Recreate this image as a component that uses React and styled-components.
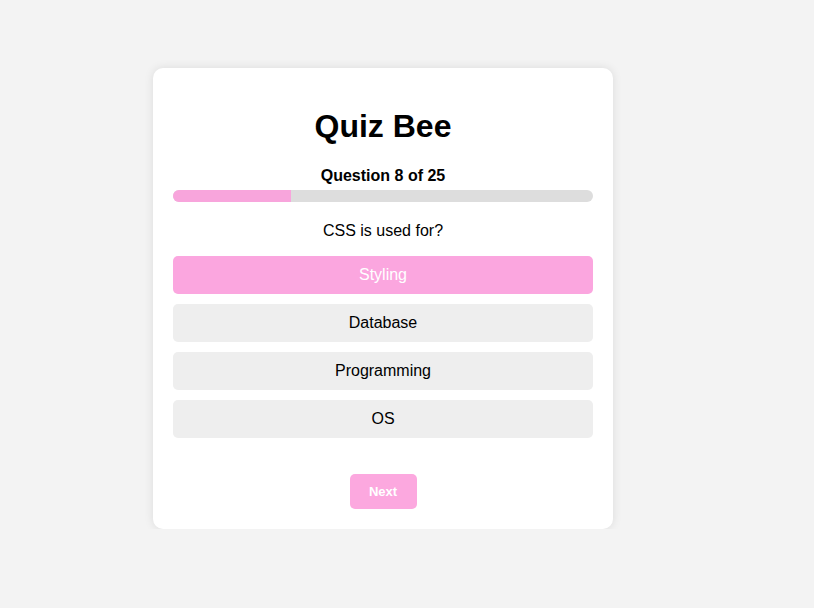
import React from "react";
import styled, { createGlobalStyle } from "styled-components";

const Global = createGlobalStyle`
  html, body { margin: 0; padding: 0; background: #f3f3f3; }
  body { font-family: "Liberation Sans", Arial, sans-serif; color: #000; }
`;

const Page = styled.div`
  width: 766px;
  display: flex;
  justify-content: center;
  align-items: flex-start;
  padding-top: 68px;
`;

const Card = styled.div`
  width: 460px;
  box-sizing: border-box;
  padding: 20px;
  background: #fff;
  border-radius: 10px;
  box-shadow: 0 0 10px rgba(0, 0, 0, 0.1);
  display: flex;
  flex-direction: column;
  align-items: stretch;
  text-align: center;
`;

const Title = styled.h1`
  margin: 20px 0 0;
  font-size: 32px;
  line-height: 37px;
  font-weight: 700;
`;

const Counter = styled.div`
  margin-top: 21px;
  font-size: 16px;
  font-weight: 700;
  line-height: 19px;
`;

const Track = styled.div`
  margin-top: 5px;
  height: 12px;
  border-radius: 6px;
  background: #dddddd;
  overflow: hidden;
`;

const Fill = styled.div`
  height: 100%;
  background: #f8a5dc;
`;

const QuestionText = styled.p`
  margin: 20px 0 0;
  font-size: 16px;
  line-height: 18px;
`;

const Options = styled.div`
  margin-top: 16px;
  display: flex;
  flex-direction: column;
  gap: 10px;
`;

const Option = styled.button`
  height: 38px;
  border: none;
  border-radius: 5px;
  font-family: inherit;
  font-size: 16px;
  background: ${(p) => (p.$selected ? "#fba6df" : "#eeeeee")};
  color: ${(p) => (p.$selected ? "#fff" : "#000")};
  cursor: pointer;
  padding: 0;
`;

const NextButton = styled.button`
  align-self: center;
  margin-top: 36px;
  width: 67px;
  height: 35px;
  border: none;
  border-radius: 5px;
  background: #fca8df;
  color: #fff;
  font-family: inherit;
  font-weight: 700;
  font-size: 13px;
  padding: 0;
  cursor: pointer;
`;

const options = ["Styling", "Database", "Programming", "OS"];

export default function App() {
  const current = 8;
  const total = 25;
  const progress = ((current - 1) / total) * 100;
  return (
    <>
      <Global />
      <Page>
        <Card>
          <Title>Quiz Bee</Title>
          <Counter>
            Question {current} of {total}
          </Counter>
          <Track>
            <Fill style={{ width: `${progress}%` }} />
          </Track>
          <QuestionText>CSS is used for?</QuestionText>
          <Options>
            {options.map((o) => (
              <Option key={o} $selected={o === "Styling"}>
                {o}
              </Option>
            ))}
          </Options>
          <NextButton>Next</NextButton>
        </Card>
      </Page>
    </>
  );
}
